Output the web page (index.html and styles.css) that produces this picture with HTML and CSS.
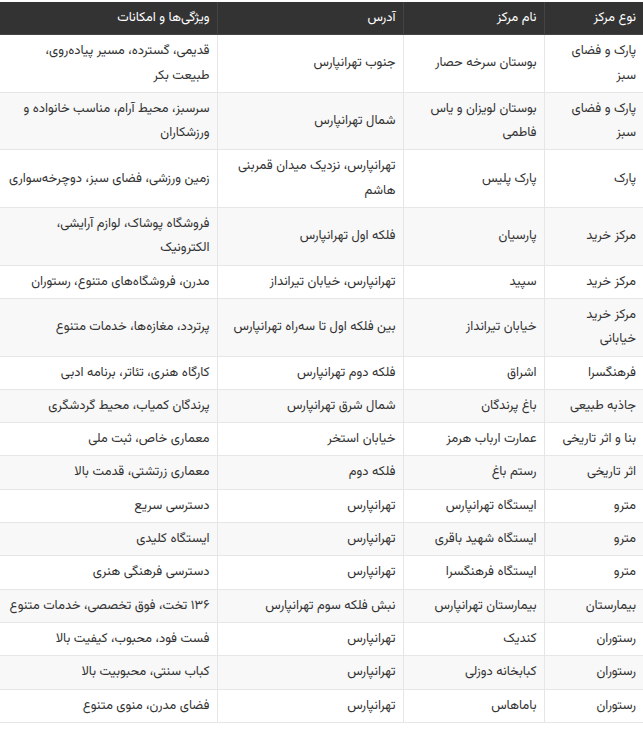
FILE: index.html
```html
<!DOCTYPE html>
<html lang="fa" dir="rtl">
<head>
<meta charset="utf-8">
<link rel="stylesheet" href="styles.css">
</head>
<body>
<table class="places">
  <colgroup>
    <col class="c-type">
    <col class="c-name">
    <col class="c-addr">
    <col class="c-feat">
  </colgroup>
  <thead>
    <tr><th>نوع مرکز</th><th>نام مرکز</th><th>آدرس</th><th>ویژگی‌ها و امکانات</th></tr>
  </thead>
  <tbody>
    <tr><td>پارک و فضای سبز</td><td>بوستان سرخه حصار</td><td>جنوب تهرانپارس</td><td>قدیمی، گسترده، مسیر پیاده‌روی، طبیعت بکر</td></tr>
    <tr><td>پارک و فضای سبز</td><td>بوستان لویزان و یاس فاطمی</td><td>شمال تهرانپارس</td><td>سرسبز، محیط آرام، مناسب خانواده و ورزشکاران</td></tr>
    <tr><td>پارک</td><td>پارک پلیس</td><td>تهرانپارس، نزدیک میدان قمربنی هاشم</td><td>زمین ورزشی، فضای سبز، دوچرخه‌سواری</td></tr>
    <tr><td>مرکز خرید</td><td>پارسیان</td><td>فلکه اول تهرانپارس</td><td>فروشگاه پوشاک، لوازم آرایشی، الکترونیک</td></tr>
    <tr><td>مرکز خرید</td><td>سپید</td><td>تهرانپارس، خیابان تیرانداز</td><td>مدرن، فروشگاه‌های متنوع، رستوران</td></tr>
    <tr><td>مرکز خرید خیابانی</td><td>خیابان تیرانداز</td><td>بین فلکه اول تا سه‌راه تهرانپارس</td><td>پرتردد، مغازه‌ها، خدمات متنوع</td></tr>
    <tr><td>فرهنگسرا</td><td>اشراق</td><td>فلکه دوم تهرانپارس</td><td>کارگاه هنری، تئاتر، برنامه ادبی</td></tr>
    <tr><td>جاذبه طبیعی</td><td>باغ پرندگان</td><td>شمال شرق تهرانپارس</td><td>پرندگان کمیاب، محیط گردشگری</td></tr>
    <tr><td>بنا و اثر تاریخی</td><td>عمارت ارباب هرمز</td><td>خیابان استخر</td><td>معماری خاص، ثبت ملی</td></tr>
    <tr><td>اثر تاریخی</td><td>رستم باغ</td><td>فلکه دوم</td><td>معماری زرتشتی، قدمت بالا</td></tr>
    <tr><td>مترو</td><td>ایستگاه تهرانپارس</td><td>تهرانپارس</td><td>دسترسی سریع</td></tr>
    <tr><td>مترو</td><td>ایستگاه شهید باقری</td><td>تهرانپارس</td><td>ایستگاه کلیدی</td></tr>
    <tr><td>مترو</td><td>ایستگاه فرهنگسرا</td><td>تهرانپارس</td><td>دسترسی فرهنگی هنری</td></tr>
    <tr><td>بیمارستان</td><td>بیمارستان تهرانپارس</td><td>نبش فلکه سوم تهرانپارس</td><td>۱۳۶ تخت، فوق تخصصی، خدمات متنوع</td></tr>
    <tr><td>رستوران</td><td>کندیک</td><td>تهرانپارس</td><td>فست فود، محبوب، کیفیت بالا</td></tr>
    <tr><td>رستوران</td><td>کبابخانه دوزلی</td><td>تهرانپارس</td><td>کباب سنتی، محبوبیت بالا</td></tr>
    <tr><td>رستوران</td><td>باماهاس</td><td>تهرانپارس</td><td>فضای مدرن، منوی متنوع</td></tr>
  </tbody>
</table>
</body>
</html>
```
FILE: styles.css
```css
html, body {
  margin: 0;
  padding: 0;
  background: #ffffff;
}
body {
  padding-top: 2px;
  font-family: "Vazirmatn", "Noto Sans Arabic", "DejaVu Sans", sans-serif;
  font-size: 13px;
  color: #333333;
}
.places {
  width: 643px;
  border-collapse: collapse;
  table-layout: fixed;
}
.c-type { width: 99px; }
.c-name { width: 141px; }
.c-addr { width: 186px; }
.c-feat { width: 217px; }
.places th,
.places td {
  text-align: right;
  vertical-align: middle;
  padding: 4px 7px;
  line-height: 24.3px;
  border: 1px solid #e6e6e6;
}
.places th {
  background: #333333;
  color: #ffffff;
  font-weight: normal;
  border-color: #444444;
  border-top: none;
}
.places tr > :first-child { border-right: none; }
.places tr > :last-child { border-left: none; }
.places tbody tr:nth-child(even) td { background: #f8f8f8; }
```
